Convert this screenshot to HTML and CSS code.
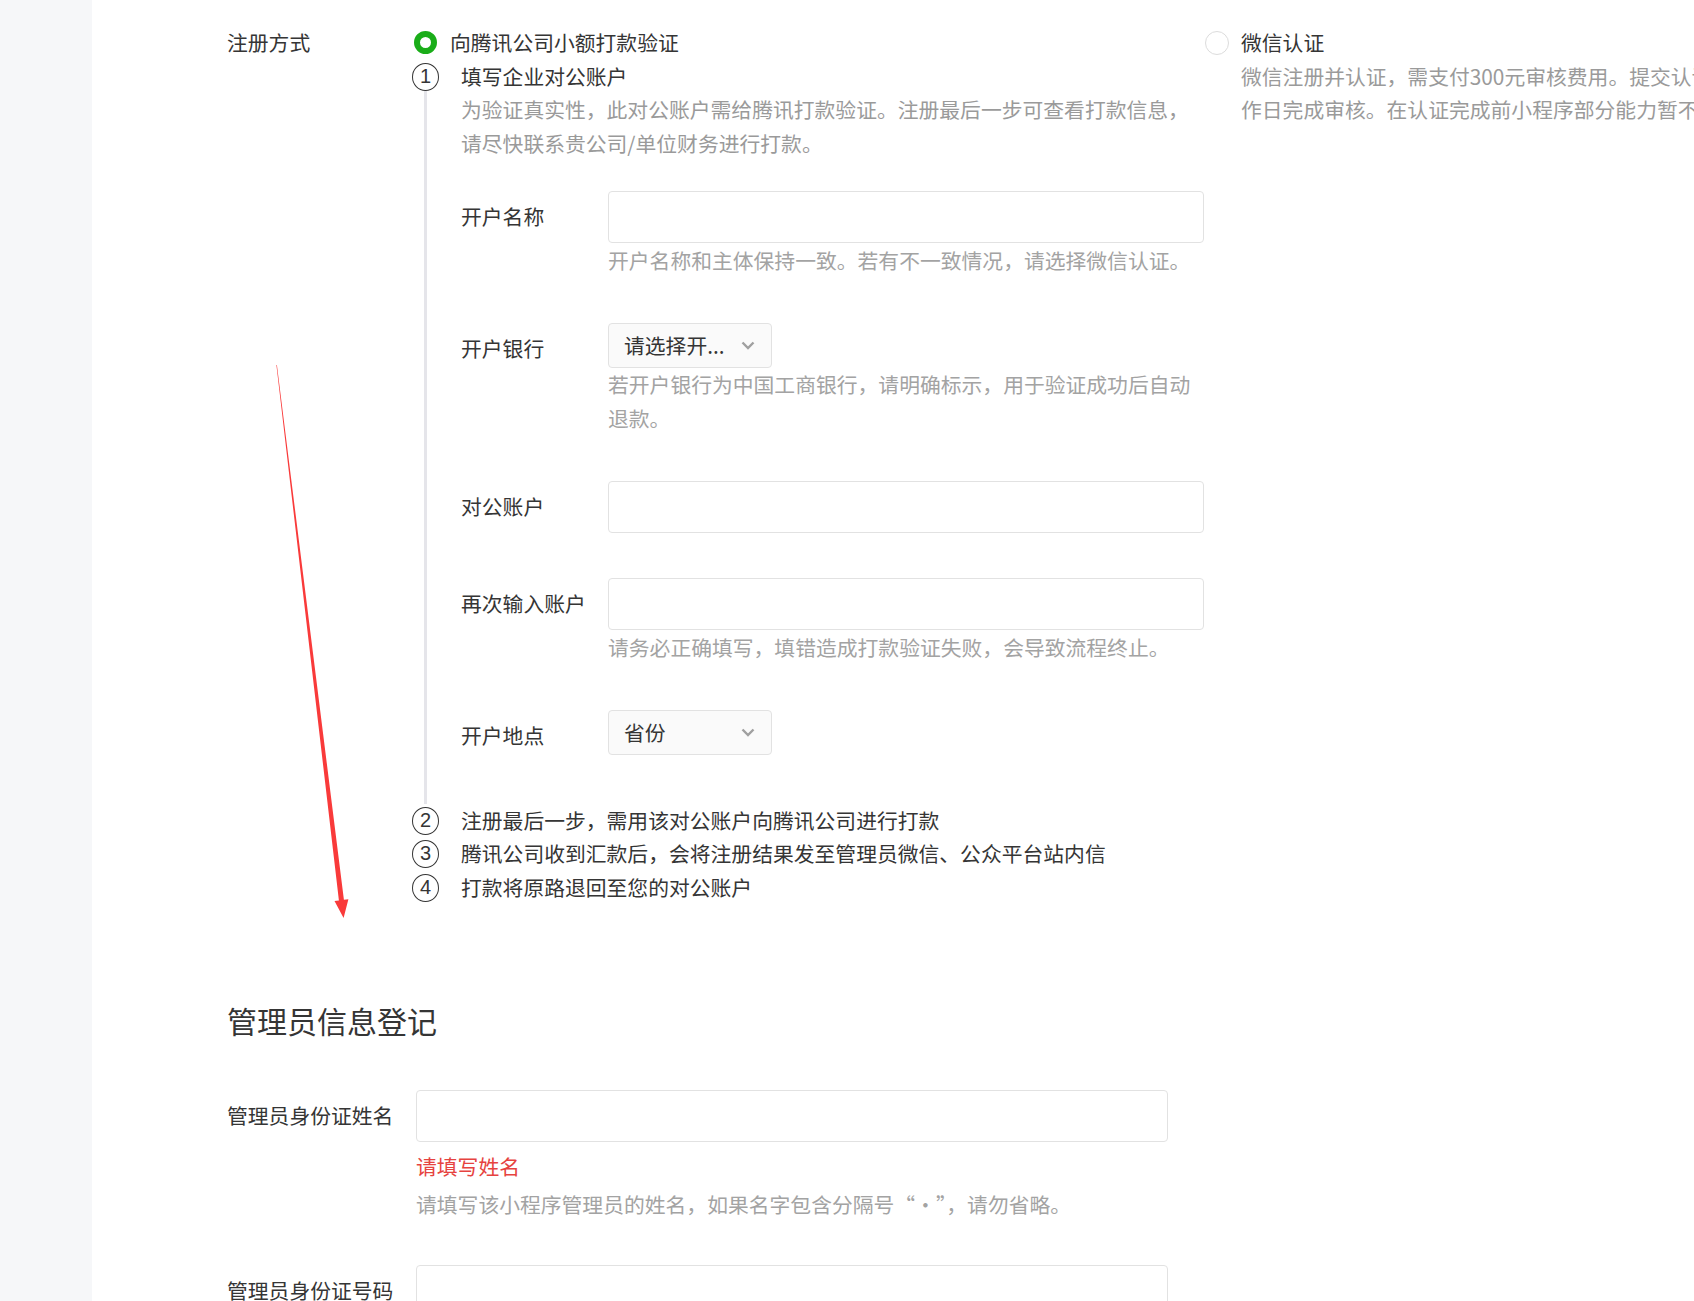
FILE: index.html
```html
<!DOCTYPE html>
<html lang="zh-CN">
<head>
  <meta charset="UTF-8" />
  <meta name="viewport" content="width=device-width, initial-scale=1.0"/>
  <title>小程序注册 - 主体信息登记</title>
  <link rel="stylesheet" href="styles.css">
</head>
<body>

  <div class="page">
    <aside class="sidebar"></aside>

    <main class="main">
      <div class="register-row">
        <div class="row-label">注册方式</div>

        <div class="register-options">
          <div class="option option-pay">
            <div class="radio-line"><span class="radio checked"></span>向腾讯公司小额打款验证</div>

            <div class="step step-first">
              <div class="step-mark"><span class="step-num">1</span><span class="step-line"></span></div>
              <div class="step-body">
                <div class="step-title">填写企业对公账户</div>
                <p class="step-desc">为验证真实性，此对公账户需给腾讯打款验证。注册最后一步可查看打款信息，请尽快联系贵公司/单位财务进行打款。</p>

                <div class="sub-form">
                  <div class="field">
                    <div class="field-label">开户名称</div>
                    <div class="field-control">
                      <input class="input" type="text">
                      <p class="tips">开户名称和主体保持一致。若有不一致情况，请选择微信认证。</p>
                    </div>
                  </div>

                  <div class="field">
                    <div class="field-label">开户银行</div>
                    <div class="field-control">
                      <div class="select">
                        <span>请选择开...</span>
                        <svg class="chevron" width="14" height="9" viewBox="0 0 14 9"><path d="M1.5 1.5l5.5 5.5 5.5-5.5" fill="none" stroke="#a0a0a0" stroke-width="2.4"/></svg>
                      </div>
                      <p class="tips tips-flat">若开户银行为中国工商银行，请明确标示，用于验证成功后自动退款。</p>
                    </div>
                  </div>

                  <div class="field">
                    <div class="field-label">对公账户</div>
                    <div class="field-control">
                      <input class="input" type="text">
                    </div>
                  </div>

                  <div class="field">
                    <div class="field-label">再次输入账户</div>
                    <div class="field-control">
                      <input class="input" type="text">
                      <p class="tips">请务必正确填写，填错造成打款验证失败，会导致流程终止。</p>
                    </div>
                  </div>

                  <div class="field">
                    <div class="field-label">开户地点</div>
                    <div class="field-control">
                      <div class="select">
                        <span>省份</span>
                        <svg class="chevron" width="14" height="9" viewBox="0 0 14 9"><path d="M1.5 1.5l5.5 5.5 5.5-5.5" fill="none" stroke="#a0a0a0" stroke-width="2.4"/></svg>
                      </div>
                    </div>
                  </div>
                </div>
              </div>
            </div>

            <div class="step">
              <div class="step-mark"><span class="step-num">2</span></div>
              <div class="step-body">注册最后一步，需用该对公账户向腾讯公司进行打款</div>
            </div>
            <div class="step">
              <div class="step-mark"><span class="step-num">3</span></div>
              <div class="step-body">腾讯公司收到汇款后，会将注册结果发至管理员微信、公众平台站内信</div>
            </div>
            <div class="step">
              <div class="step-mark"><span class="step-num">4</span></div>
              <div class="step-body">打款将原路退回至您的对公账户</div>
            </div>
          </div>

          <div class="option option-wx">
            <div class="radio-line"><span class="radio"></span>微信认证</div>
            <p class="option-desc">微信注册并认证，需支付300元审核费用。提交认证材料后，1-5个工<br>作日完成审核。在认证完成前小程序部分能力暂不支持。</p>
          </div>
        </div>
      </div>

      <h2 class="section-title">管理员信息登记</h2>

      <div class="admin-field">
        <div class="row-label">管理员身份证姓名</div>
        <div class="admin-control">
          <input class="input" type="text">
          <p class="error">请填写姓名</p>
          <p class="tips">请填写该小程序管理员的姓名，如果名字包含分隔号“·”，请勿省略。</p>
        </div>
      </div>

      <div class="admin-field">
        <div class="row-label">管理员身份证号码</div>
        <div class="admin-control">
          <input class="input" type="text">
        </div>
      </div>
    </main>
  </div>

  <!-- 标注箭头 -->
  <svg class="mark-arrow" width="1694" height="1301" viewBox="0 0 1694 1301">
    <polygon fill="#f93a3a" points="276.4,365 276.9,365 343.9,899.8 348.4,899.3 343.6,918 334.5,901 338.9,900.4"/>
  </svg>

</body>
</html>
```

FILE: styles.css
```css
* {
  box-sizing: border-box;
  margin: 0;
  padding: 0;
}

html, body {
  height: 100%;
}

body {
  position: relative;
  overflow: hidden;
  background-color: #fff;
  color: #353535;
  font-family: "Microsoft YaHei", "Noto Sans CJK SC", sans-serif;
  font-size: 20.8px;
  line-height: 33.5px;
}

.page {
  display: flex;
  min-height: 100%;
}

.sidebar {
  flex: 0 0 92px;
  background-color: #f6f7f9;
}

.main {
  flex: 1;
  min-width: 0;
  padding: 26px 0 0 135px;
}

.register-row {
  display: flex;
}

.row-label {
  flex: 0 0 185px;
}

.register-options {
  display: flex;
}

.option-pay {
  flex: 0 0 793px;
}

.option-wx {
  flex: 0 0 auto;
}

.radio-line {
  display: flex;
  align-items: center;
}

.radio {
  width: 24px;
  height: 24px;
  margin-right: 12px;
  border: 1px solid #dcdcdc;
  border-radius: 50%;
  background-color: #fff;
}

.option-pay .radio {
  margin-left: 2px;
}

.radio.checked {
  width: 23px;
  height: 23px;
  margin-right: 13px;
  border: 6.5px solid #1aad19;
}

.option-desc {
  padding-left: 36px;
  color: #9a9a9a;
  white-space: nowrap;
}

.step {
  display: flex;
}

.step-mark {
  flex: 0 0 27px;
  display: flex;
  flex-direction: column;
  align-items: center;
}

.step-num {
  width: 27px;
  height: 28px;
  margin-top: 3px;
  border: 1.5px solid #353535;
  border-radius: 50%;
  font-family: "Liberation Sans", Arial, sans-serif;
  font-size: 20px;
  line-height: 25px;
  text-align: center;
}

.step-line {
  flex: 1;
  width: 3px;
  background-color: #e5e5ea;
}

.step-body {
  margin-left: 22px;
}

.step-first .step-body {
  padding-bottom: 48.5px;
}

.step-desc {
  width: 730px;
  color: #9a9a9a;
}

.sub-form {
  padding-top: 31px;
}

.field {
  display: flex;
  margin-bottom: 45.5px;
}

.field:last-child {
  margin-bottom: 0;
}

.field-label {
  flex: 0 0 147px;
  padding-top: 9px;
}

.field-control {
  width: 596px;
}

.input {
  display: block;
  width: 100%;
  height: 52px;
  padding: 0 16px;
  border: 1px solid #e2e2e2;
  border-radius: 4px;
  background-color: #fff;
  font: inherit;
  outline: none;
}

.select {
  display: flex;
  align-items: center;
  justify-content: space-between;
  width: 164px;
  height: 45px;
  padding: 0 16px 0 15px;
  border: 1px solid #e2e2e2;
  border-radius: 4px;
  background-color: #fafafa;
}

.tips {
  margin-top: 1px;
  color: #a3a3a3;
}

.tips-flat {
  margin-top: 0;
}

.section-title {
  margin-top: 95px;
  font-size: 30px;
  font-weight: normal;
  line-height: 42px;
}

.admin-field {
  display: flex;
  margin-top: 49px;
}

.admin-field + .admin-field {
  margin-top: 44px;
}

.admin-field .row-label {
  flex: 0 0 189px;
  padding-top: 9px;
}

.admin-control {
  width: 752px;
}

.error {
  margin-top: 8px;
  color: #e64340;
}

.admin-control .tips {
  margin-top: 4px;
}

.mark-arrow {
  position: absolute;
  top: 0;
  left: 0;
  pointer-events: none;
}
```
